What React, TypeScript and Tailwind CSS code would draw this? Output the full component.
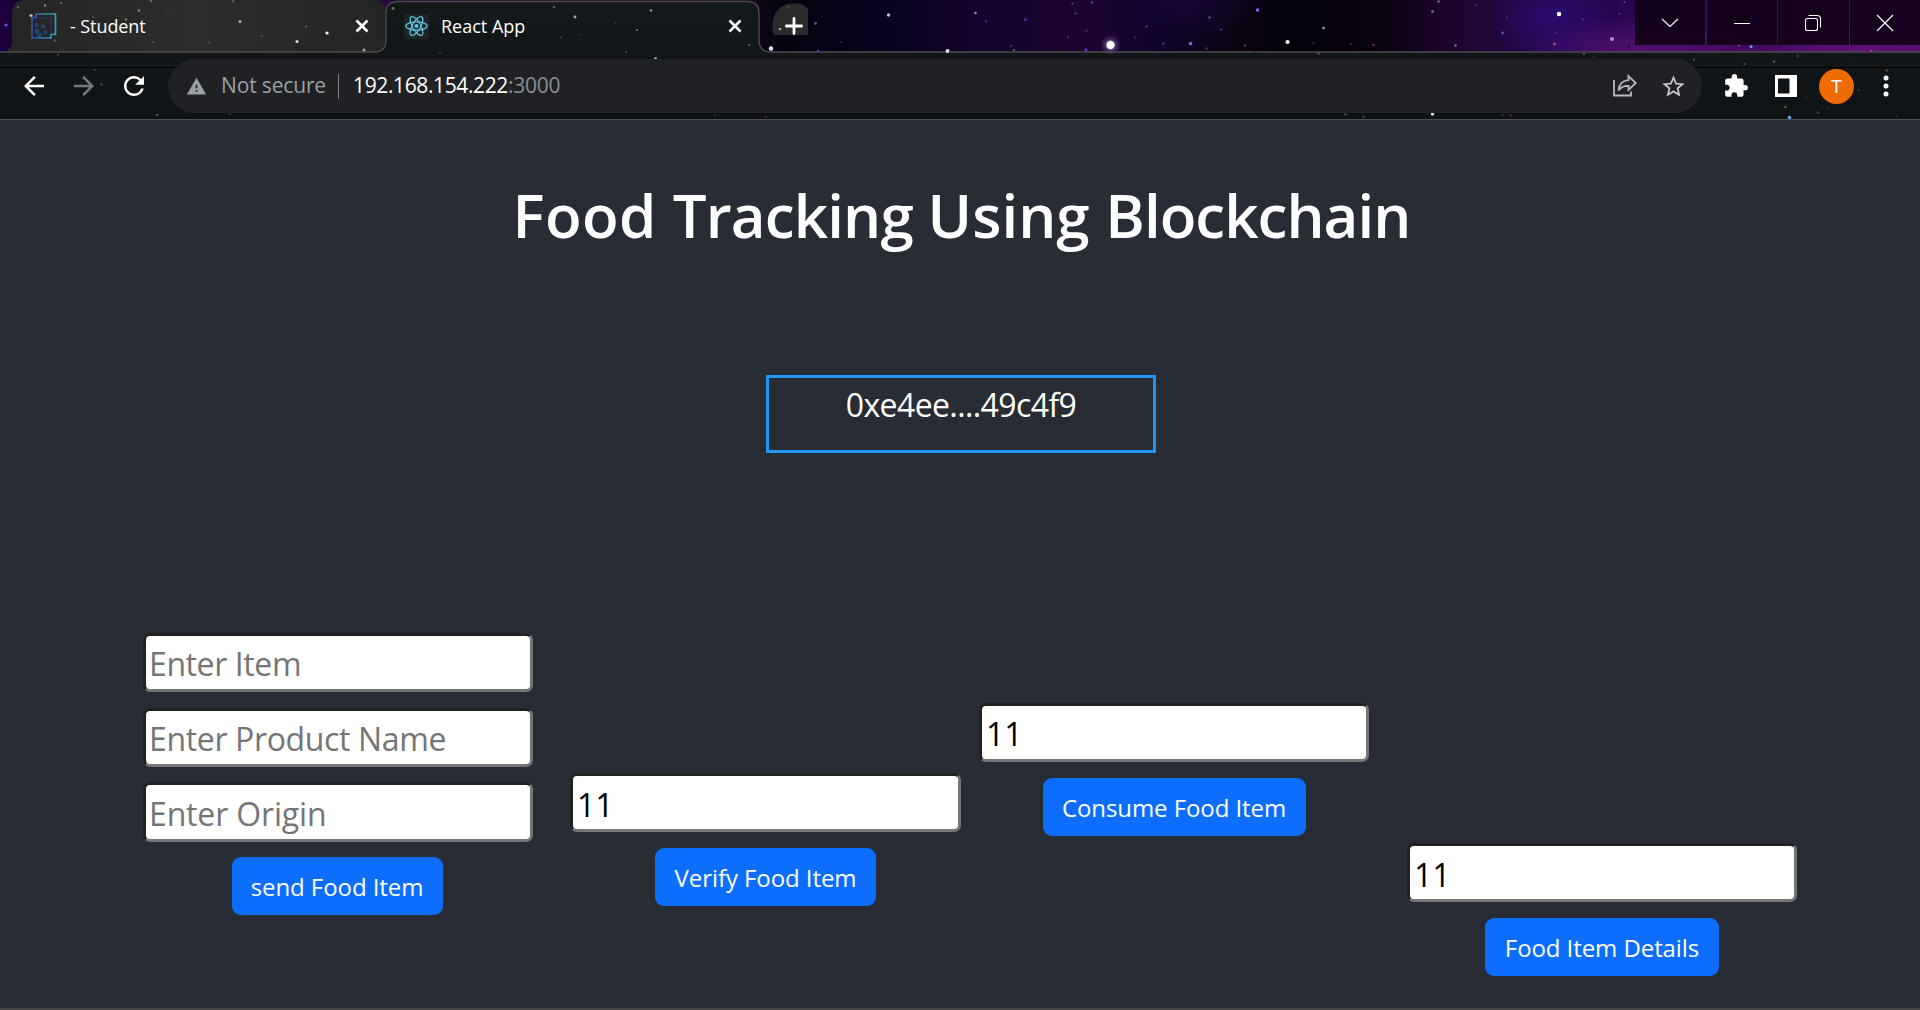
import React from 'react';
import { MdArrowBack, MdArrowForward, MdRefresh, MdWarning, MdStarBorder, MdExtension } from 'react-icons/md';

type Star = [number, number, number, string];

const stars: Star[] = [
  [6, 25, 2, '#7a4cf0'], [18, 7, 1.2, '#777'], [45, 5.5, 1.5, '#888'], [61, 3, 1.2, '#777'], [31, 15.5, 2, '#bbb'],
  [139, 10.5, 1.6, '#888'], [151, 1, 1.3, '#777'], [126, 19.5, 1.3, '#999'], [240, 21.5, 2, '#aaa'], [327, 33, 2, '#fff'],
  [297, 41.5, 2, '#ddd'], [306, 26.5, 1.5, '#555'], [262, 36, 1.6, '#4a4a4a'], [209, 42.5, 1.4, '#555'], [233, 1, 1.5, '#8a4a4a'],
  [364, 50, 1.8, '#aaa'], [153, 42, 1.2, '#555'], [55, 40.5, 1.3, '#666'], [93, 17, 1.4, '#4a4a4a'], [168, 14, 1.2, '#484848'],
  [393, 8.5, 1.8, '#7a7658'], [554, 7, 1.5, '#556'], [575, 17, 1.8, '#a0a8c4'], [651, 10.5, 1.7, '#8492b4'], [637, 30, 1.4, '#6b7896'],
  [561, 37.5, 1.4, '#444'], [579, 35, 1.2, '#333'], [615, 23, 1.2, '#333'], [440, 53, 1.4, '#444'], [749, 45, 1.5, '#555'],
  [626, 52, 1.3, '#444'], [432, 14, 1.2, '#333'], [655.5, 58.5, 1.6, '#b9c6ff'], [780, 29, 1.6, '#aaa'], [788, 7, 1.2, '#555'],
  [771, 48.5, 2.8, '#e6dcff'], [815.5, 23.5, 1.8, '#5a5590'], [818, 51, 1.6, '#5b3ae0'], [841, 42, 1.1, '#333055'],
  [888.5, 15, 2.1, '#c0b6ff'], [975.5, 13, 1.6, '#a294b8'], [986, 21.5, 1.5, '#3e2880'], [1025.5, 19.5, 1.9, '#4e2a94'],
  [947.5, 51, 2.4, '#e8d8ff'], [1011, 46, 1.3, '#5a3a70'], [1014, 50, 1.4, '#705a88'], [1075.5, 13.5, 1.5, '#4e2598'],
  [1092, 2.5, 1.6, '#5c2eb0'], [1072.5, 3.5, 1.4, '#5a4a6a'], [1068, 37, 1.4, '#5c25aa'], [1086.5, 31, 1.4, '#602448'],
  [1086, 50, 1.8, '#6b2fd0'], [1146.5, 26.5, 1.6, '#6a2a4c'], [1135, 37.5, 1.6, '#462450'], [1163.5, 43.5, 1.6, '#34348c'],
  [1190.5, 43.5, 2.3, '#8a5af0'], [1206.5, 48.5, 1.6, '#56284e'], [1221, 29.5, 1.5, '#303070'], [1209.5, 17.5, 1.5, '#5a506c'],
  [1257.5, 10, 2.1, '#8a6aff'], [1245, 45.5, 1.5, '#54404c'], [1287.5, 42, 2.6, '#fff'], [1323.5, 28, 1.8, '#8a8a8a'],
  [1313.5, 43, 1.5, '#30246c'], [1351, 44, 1.4, '#3e304a'], [1373.5, 45, 1.6, '#6a2830'], [1438.5, 1.5, 1.6, '#786a86'],
  [1432.5, 11.5, 1.6, '#8a7a9a'], [1476.5, 5, 1.4, '#4c3652'], [1455.5, 45.5, 1.8, '#6a5490'], [1502.5, 33, 1.8, '#6058a0'],
  [1507, 17.5, 1.6, '#42188e'], [1559, 14, 2.8, '#fff'], [1582.5, 19.5, 1.6, '#5028a0'], [1554.5, 44, 1.8, '#b04472'],
  [1556.5, 33, 1.4, '#4028b4'], [1612, 39, 2.6, '#c080f0'], [1624.5, 2, 1.4, '#624690'], [1619.5, 14, 1.4, '#503a90'],
  [1629, 46.5, 1.8, '#2c0848'], [1751, 46.5, 2, '#7a8af8'], [1739, 45.5, 1.4, '#8a50a0'], [1871, 51, 1.6, '#b030b0'],
  [58, 55, 1.3, '#454034'], [95, 70, 1.4, '#3a3a3a'], [101.5, 84.5, 1.5, '#4c4c4c'], [157, 115, 1.7, '#4a4a55'], [230, 114, 1.3, '#3a3a3a'],
  [715, 115, 1.5, '#2c2824'], [766, 117, 1.5, '#3a2c2c'], [1318.5, 53.5, 1.5, '#4c6068'], [1254, 52, 1.3, '#2a2a2a'],
  [1345.5, 114.5, 1.5, '#484848'], [1363.5, 117, 1.5, '#484848'], [1432.5, 114, 2.2, '#cfe4ff'], [1502.5, 115, 1.4, '#383838'],
  [1510.5, 115.5, 1.5, '#4a342e'], [1584, 54, 1.6, '#484848'], [1593.5, 57, 1.3, '#3c2828'], [1694, 59.5, 1.4, '#556'],
  [1744.5, 64, 1.6, '#484848'], [1774, 61.5, 1.6, '#505050'], [1797.5, 56, 1.6, '#583e42'], [1853, 62, 1.2, '#2a2a2a'],
  [1887, 70.5, 1.7, '#5c3c3c'], [1858.5, 90, 1.6, '#2a3036'], [1805.5, 97.5, 1.4, '#222c56'], [1785.5, 107, 1.7, '#58583c'],
  [1818, 112.5, 1.7, '#3c3c3c'], [1829, 108, 1.4, '#2c2c2c'], [1789.5, 117.5, 2.2, '#6aa8f8'], [1897, 116.5, 1.4, '#222e4c'],
];

function StarBackdrop() {
  return (
    <svg className="pointer-events-none absolute inset-0" width="1920" height="119" viewBox="0 0 1920 119">
      <defs>
        <linearGradient id="tabFill" x1="0" y1="0" x2="0" y2="1">
          <stop offset="0" stopColor="#14191c" />
          <stop offset="1" stopColor="#0f1214" />
        </linearGradient>
        <linearGradient id="backTab" x1="0" y1="0" x2="1" y2="0">
          <stop offset="0" stopColor="#242424" />
          <stop offset="0.5" stopColor="#2c2c2c" />
          <stop offset="1" stopColor="#242424" />
        </linearGradient>
        <radialGradient id="blueHaze">
          <stop offset="0" stopColor="#2c1080" stopOpacity="0.65" />
          <stop offset="1" stopColor="#30108a" stopOpacity="0" />
        </radialGradient>
        <radialGradient id="pinkHaze">
          <stop offset="0" stopColor="#6a1680" stopOpacity="0.6" />
          <stop offset="1" stopColor="#7a1a90" stopOpacity="0" />
        </radialGradient>
        <radialGradient id="glow">
          <stop offset="0" stopColor="#fff" />
          <stop offset="0.35" stopColor="#fff" />
          <stop offset="0.5" stopColor="#6a4a90" stopOpacity="0.6" />
          <stop offset="1" stopColor="#6a4a90" stopOpacity="0" />
        </radialGradient>
      </defs>
      <ellipse cx="1550" cy="18" rx="60" ry="46" fill="url(#blueHaze)" />
      <ellipse cx="1640" cy="50" rx="120" ry="34" fill="url(#pinkHaze)" />
      <ellipse cx="1860" cy="52" rx="110" ry="24" fill="url(#pinkHaze)" />
      <ellipse cx="1195" cy="5" rx="70" ry="30" fill="url(#blueHaze)" opacity="0.35" />
      <path d="M0 52c8 0 12-4 12-12V14C12 5 17 0 26 0h346c9 0 14 5 14 14v26c0 8-4 12-12 12z" fill="url(#backTab)" />
      <path d="M0 52.500h374c8 0 12-4 12-12V13c0-8 4-11.500 12-11.500h349c8 0 12 4 12 11.500v27c0 8 4 12 12 12h1149V120H0z" fill="url(#tabFill)" />
      <path d="M0 52h374c8 0 12-4 12-12V13c0-8 4-11.500 12-11.500h349c8 0 12 4 12 11.500v27c0 8 4 12 12 12h1149" fill="none" stroke="#4b4b4b" strokeWidth="1.400" />
      <path d="M808 3.500V35h-34c-4-12-1-31.500 20-31.500 7 0 11 2 14 5z" fill="#2b2b2b" />
      <path d="M0 67.500h1920" stroke="#000" strokeWidth="1" />
      {stars.map(([x, y, r, fill]) => (
        <circle key={`${x}-${y}`} cx={x} cy={y} r={r * 0.8} fill={fill} />
      ))}
      <circle cx="1110.500" cy="45" r="10" fill="url(#glow)" />
    </svg>
  );
}

function CloseX() {
  return (
    <svg width="14" height="14" viewBox="0 0 14 14" stroke="#fff" strokeWidth="2.600">
      <path d="M1.500 1.500l11 11M12.500 1.500l-11 11" />
    </svg>
  );
}

function StudentIcon() {
  return (
    <svg width="26" height="26" viewBox="0 0 26 26" fill="none">
      <defs>
        <linearGradient id="studentEdge" x1="0" y1="0" x2="1" y2="0">
          <stop offset="0" stopColor="#2c55b0" />
          <stop offset="1" stopColor="#2fa8ab" />
        </linearGradient>
      </defs>
      <path d="M5 1h19.500v20.500h-4.500v3.500H1V4.500h4z" stroke="url(#studentEdge)" strokeWidth="1.600" />
      <path d="M5 5h15.500v15.500" stroke="#22305f" strokeWidth="1.600" />
      <path d="M4 10h3v4h-3zM4 16h4v4h3v4H6v-3H4zM10 12h4v3h-4zM13 18h3v3h-3z" fill="#1e447c" />
    </svg>
  );
}

function ReactIcon() {
  return (
    <svg width="25" height="25" viewBox="0 0 25 25" fill="none" stroke="#58c4e6" strokeWidth="1.250">
      <rect width="25" height="25" rx="3" fill="#222424" stroke="none" />
      <g transform="translate(12.500 12)">
        <ellipse rx="10.600" ry="4.100" />
        <ellipse rx="10.600" ry="4.100" transform="rotate(60)" />
        <ellipse rx="10.600" ry="4.100" transform="rotate(120)" />
        <circle r="2" fill="#58c4e6" stroke="none" />
      </g>
    </svg>
  );
}

function ShareIcon() {
  return (
    <svg width="26" height="24" viewBox="0 0 26 24" fill="none" stroke="#b9babc" strokeWidth="1.800">
      <path d="M2 6v15.500h17V17.500" />
      <path d="M6.500 16.500C7 10 10.500 6.500 16.500 6.200V2.200l7.200 6.800-7.200 6.800v-4C12 11.600 8.700 13 6.500 16.500z" strokeLinejoin="miter" />
    </svg>
  );
}

function SidePanelIcon() {
  return (
    <svg width="22" height="22" viewBox="0 0 22 22">
      <path fillRule="evenodd" fill="#fff" d="M0 0h22v22H0zM3 3.500v15h11.500v-15z" />
    </svg>
  );
}

function WindowButtons() {
  const cell = 'flex h-[45px] items-center justify-center bg-[#0d0012]/85';
  return (
    <div className="flex gap-px">
      <div className={`${cell} mr-px w-[70px]`}>
        <svg width="18" height="10" viewBox="0 0 18 10" fill="none" stroke="#fff" strokeWidth="1.100"><path d="M1 1l8 7.500L17 1" /></svg>
      </div>
      <div className={`${cell} w-[70px]`}><div className="mr-px mt-px h-px w-4 bg-white" /></div>
      <div className={`${cell} w-[71px]`}>
        <svg className="mr-[2px]" width="18" height="18" viewBox="0 0 18 18" fill="none" stroke="#fff" strokeWidth="1.100">
          <rect x="1.500" y="4.500" width="12" height="12" rx="2" />
          <path d="M4.500 1.500h8.500a3.500 3.500 0 0 1 3.500 3.500v8.500" />
        </svg>
      </div>
      <div className={`${cell} w-[70px]`}>
        <svg width="18" height="18" viewBox="0 0 18 18" stroke="#fff" strokeWidth="1.200"><path d="M1 1l16 16M17 1L1 17" /></svg>
      </div>
    </div>
  );
}

function TabStrip() {
  return (
    <div className="relative flex h-[52px] items-start text-[18px] leading-[52px] text-white">
      <div className="flex h-[52px] w-[386px] items-center pl-[31px] pr-[17px]">
        <StudentIcon />
        <span className="ml-[13px] flex-1 tracking-[-0.08px]">- Student</span>
        <CloseX />
      </div>
      <div className="flex h-[52px] w-[373px] items-center pl-[18px] pr-[17px]">
        <ReactIcon />
        <span className="ml-[12px] flex-1">React App</span>
        <CloseX />
      </div>
      <div className="flex h-[52px] w-[70px] items-center justify-center">
        <svg width="18" height="18" viewBox="0 0 18 18" stroke="#fff" strokeWidth="2.800" strokeLinecap="round"><path d="M9 1.400v15.200M1.400 9h15.200" /></svg>
      </div>
      <div className="flex-1" />
      <WindowButtons />
    </div>
  );
}

function Toolbar() {
  return (
    <div className="relative mt-[7px] flex h-[54px] items-center">
      <div className="flex w-[168px] items-center gap-5 pl-[19px] text-[30px] text-white">
        <MdArrowBack />
        <MdArrowForward className="text-[#77797b]" />
        <MdRefresh />
      </div>
      <div className="flex h-[54px] w-[1534px] items-center rounded-full bg-[#202124] pl-[18px] pr-[15px] text-[21px] leading-[52px]">
        <MdWarning className="text-[21px] text-[#9aa0a6]" />
        <span className="mb-[2px] ml-[14px] tracking-[-0.15px] text-[#9aa0a6]">Not secure</span>
        <div className="ml-[12px] h-[25px] w-px bg-[#7b7e82]" />
        <span className="mb-[2px] ml-[14px] tracking-[-0.38px] text-white">192.168.154.222<span className="tracking-[-0.25px] text-[#8b8e92]">:3000</span></span>
        <div className="flex-1" />
        <ShareIcon />
        <MdStarBorder className="ml-[22px] text-[27px] text-[#c3c4c6]" />
      </div>
      <MdExtension className="ml-[21px] text-[26px] text-white" />
      <div className="ml-[26px]"><SidePanelIcon /></div>
      <div className="ml-[22px] flex h-[35px] w-[35px] items-center justify-center rounded-full bg-[#ef6c00] font-[Roboto] text-[19px] leading-none text-white">T</div>
      <svg className="ml-[29px]" width="6" height="24" viewBox="0 0 6 24" fill="#fff">
        <circle cx="3" cy="4" r="2.500" /><circle cx="3" cy="12" r="2.500" /><circle cx="3" cy="20" r="2.500" />
      </svg>
    </div>
  );
}

function Field({ placeholder, value, className }: { placeholder?: string; value?: string; className?: string }) {
  return (
    <input
      placeholder={placeholder}
      defaultValue={value}
      className={`rounded-[7px] border-[3px] border-t-[#212121] border-r-[#767676] border-b-[#767676] border-l-[#212121] bg-white text-[32px] leading-[48px] text-black placeholder:text-[#757575] placeholder:opacity-100 ${className ?? ''}`}
    />
  );
}

function ActionButton({ label, className }: { label: string; className: string }) {
  return (
    <button className={`h-[58px] rounded-[9px] bg-[#0d6efd] pt-px text-[24px] leading-[57px] tracking-[-0.08px] text-white ${className}`}>
      {label}
    </button>
  );
}

export default function App() {
  return (
    <div className="flex h-[1010px] w-[1920px] flex-col overflow-hidden bg-[#282c34] font-['Open_Sans',sans-serif]">
      <header className="relative h-[120px] shrink-0 border-b border-[#4e4f52] bg-[linear-gradient(90deg,#1e0040_0px,#1a0038_12px,#2a0a3c_400px,#1c0a26_740px,#06030f_780px,#05031a_860px,#150430_980px,#1b0530_1090px,#120430_1150px,#0d0414_1230px,#04020a_1290px,#0a0210_1380px,#1c052c_1440px,#1f063b_1500px,#240650_1580px,#2a0650_1640px,#3a0a58_1720px,#4a0c68_1920px)]">
        <StarBackdrop />
        <TabStrip />
        <Toolbar />
      </header>
      <main className="flex flex-1 flex-col border-b-2 border-[#454545]">
        <h1 className="mt-[59px] pl-[3px] text-center text-[60px] font-semibold leading-[72px] text-white">
          <span className="tracking-[0.4px]">Food </span>
          <span className="tracking-[-0.85px]">Tracking </span>
          <span className="tracking-[0.05px]">Using </span>
          <span className="tracking-[-0.95px]">Blockchain</span>
        </h1>
        <div className="ml-[766px] mt-[124px] h-[78px] w-[390px] border-[3px] border-[#2196f3] text-center text-[32px] leading-[53px] tracking-[-0.6px] text-white">
          0xe4ee....49c4f9
        </div>
        <div className="mt-[180px] flex items-start pl-[143px]">
          <section className="flex w-[390px] flex-col items-center">
            <Field placeholder="Enter Item" className="h-[59px] w-[390px] pl-[3px] pt-[2px] tracking-[-0.4px]" />
            <Field placeholder="Enter Product Name" className="mt-4 h-[59px] w-[390px] pl-[3px] pt-[2px] tracking-[-0.35px]" />
            <Field placeholder="Enter Origin" className="mt-[15px] h-[60px] w-[390px] pl-[3px] pt-[2px] tracking-[-0.15px]" />
            <ActionButton label="send Food Item" className="mr-[2px] mt-[15px] w-[211px]" />
          </section>
          <section className="ml-[37px] mt-[140px] flex w-[391px] flex-col items-center">
            <Field value="11" className="h-[59px] w-[391px] pl-[4px] pt-[4px]" />
            <ActionButton label="Verify Food Item" className="mt-4 w-[221px]" />
          </section>
          <section className="ml-[18px] mt-[70px] flex w-[390px] flex-col items-center">
            <Field value="11" className="h-[59px] w-[390px] pl-[4px] pt-[2px]" />
            <ActionButton label="Consume Food Item" className="mt-4 w-[263px]" />
          </section>
          <section className="ml-[38px] mt-[210px] flex w-[390px] flex-col items-center">
            <Field value="11" className="h-[59px] w-[390px] pl-[4px] pt-[4px]" />
            <ActionButton label="Food Item Details" className="mt-4 w-[234px]" />
          </section>
        </div>
      </main>
    </div>
  );
}
